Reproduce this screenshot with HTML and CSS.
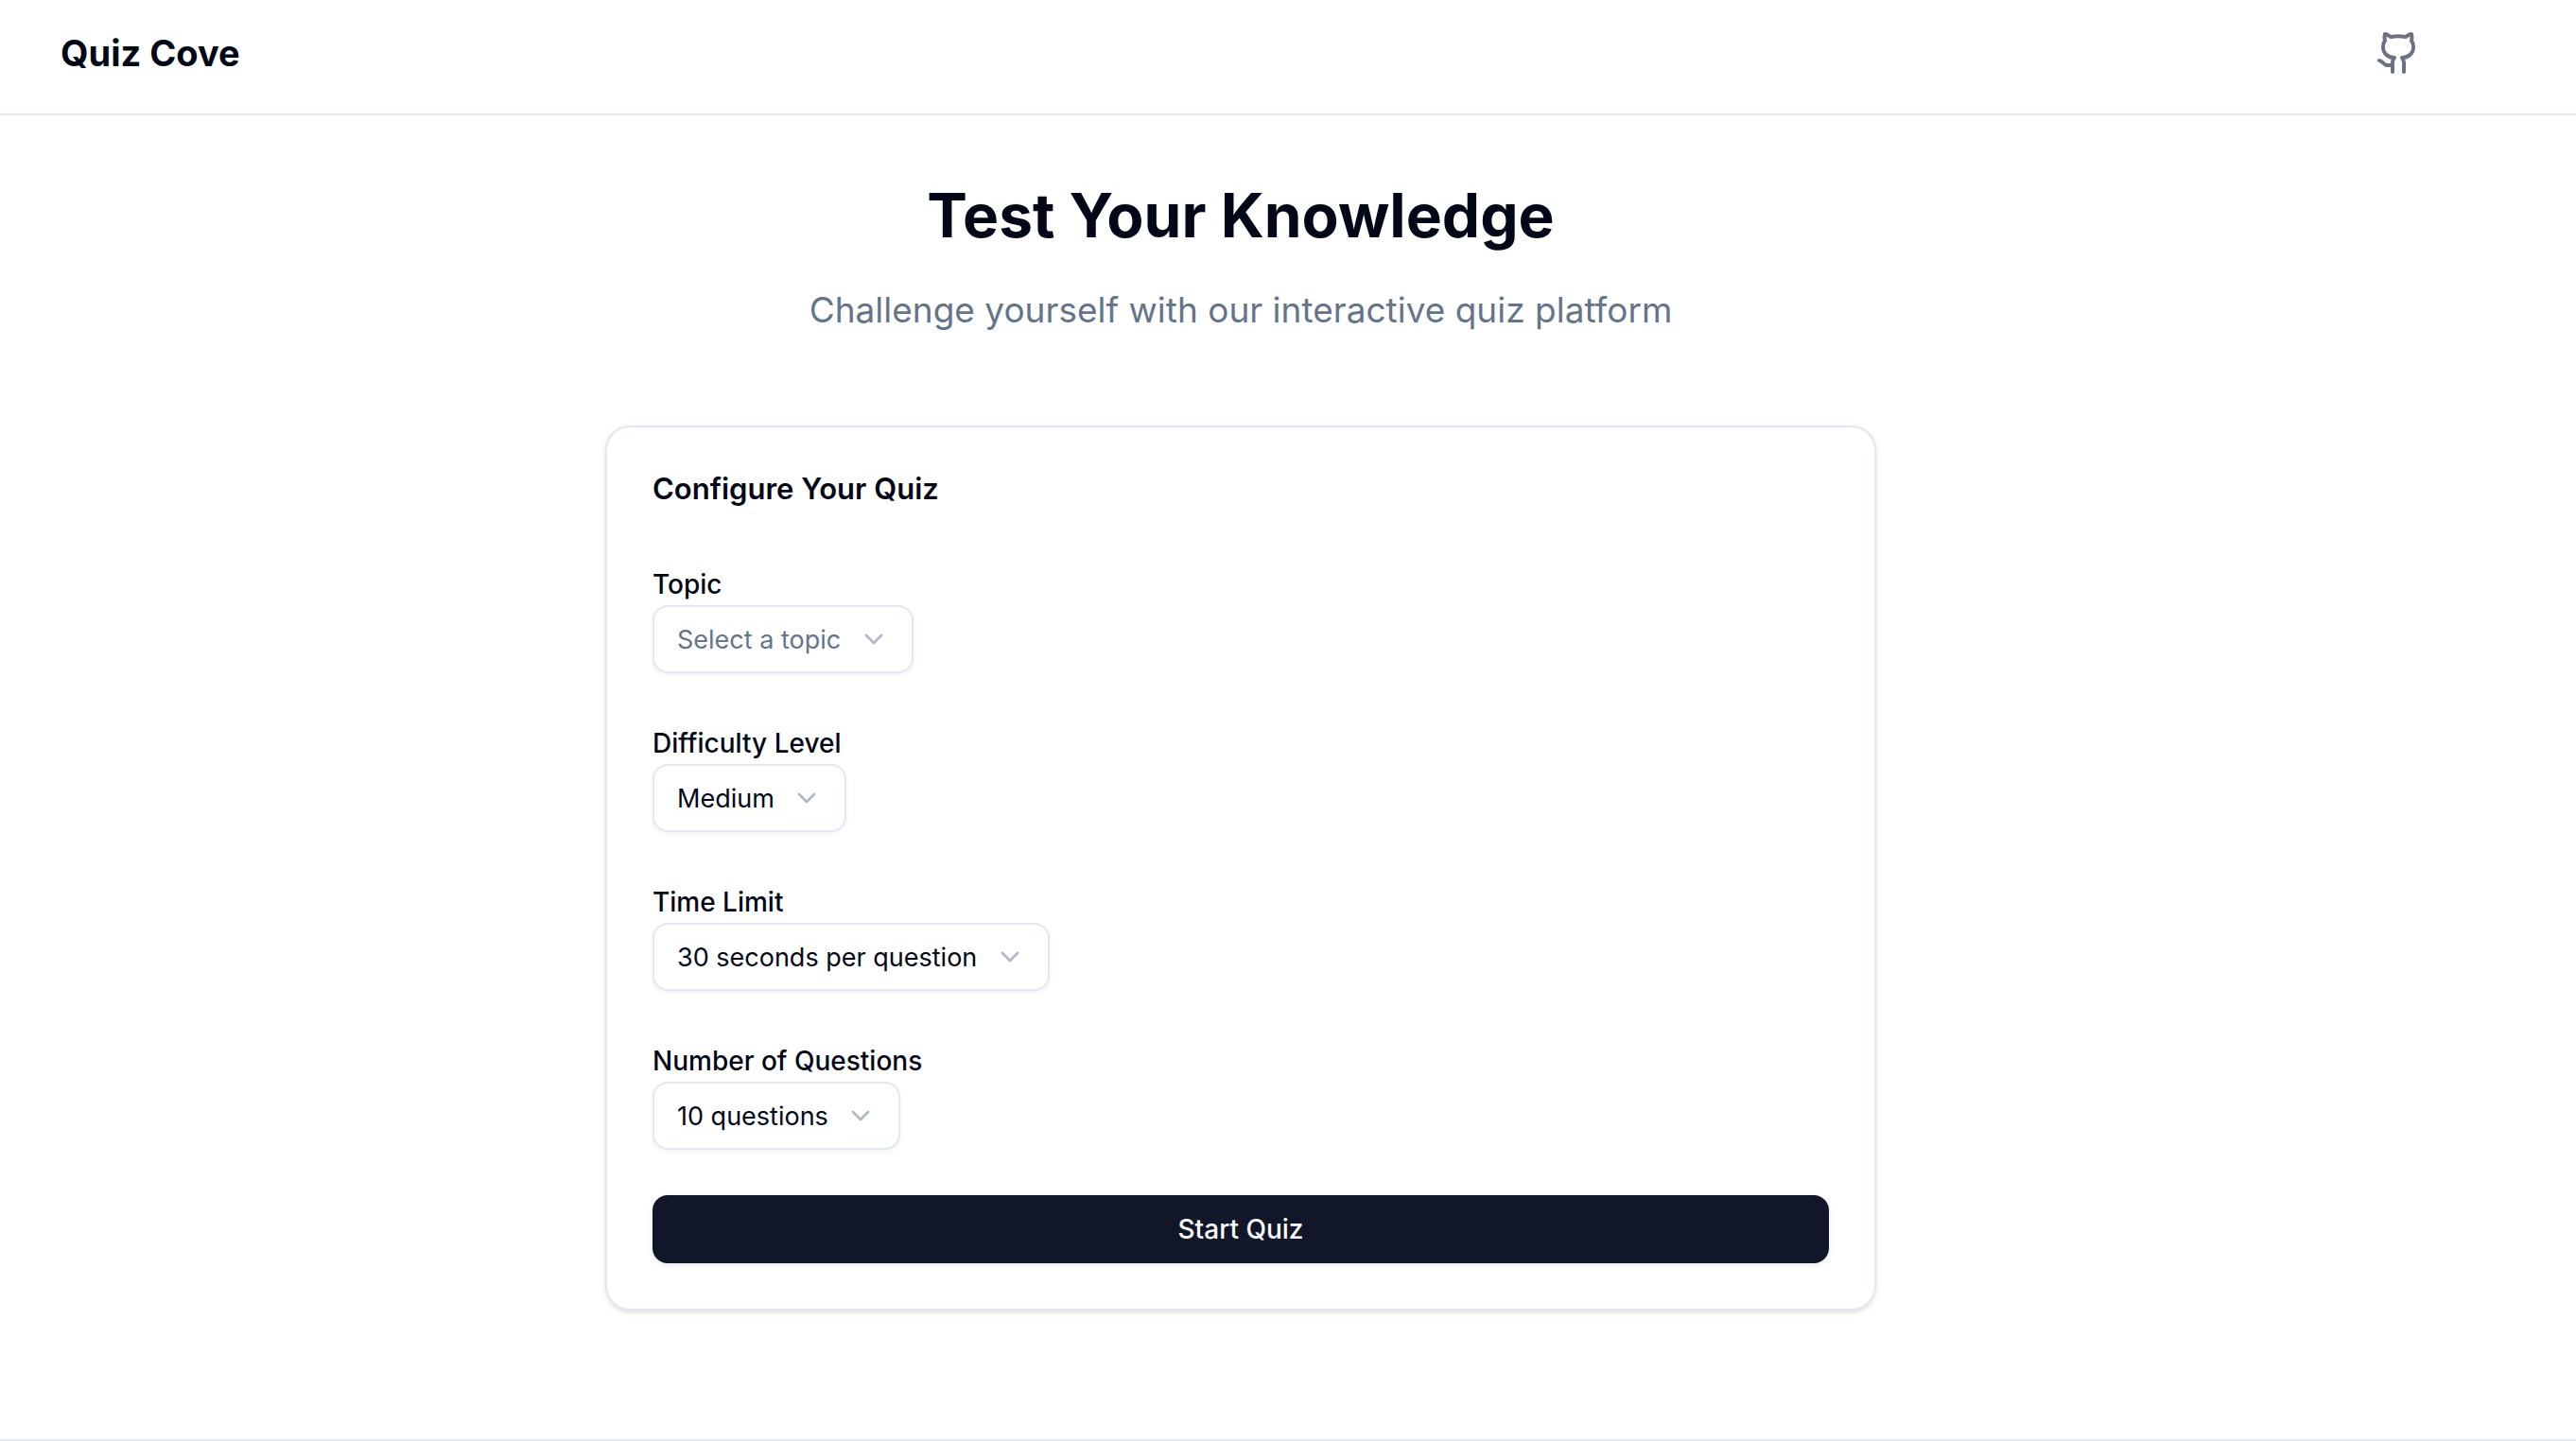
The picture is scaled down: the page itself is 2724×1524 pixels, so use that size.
FILE: index.html
```html
<!DOCTYPE html>
<html lang="en">
<head>
  <meta charset="utf-8">
  <meta name="viewport" content="width=device-width, initial-scale=1">
  <title>Quiz Cove</title>
  <link rel="stylesheet" href="styles.css">
</head>
<body>
  <header class="site-header">
    <div class="container site-bar">
      <a class="brand" href="#">Quiz Cove</a>
      <a class="repo-link" href="#" aria-label="GitHub">
        <svg class="repo-icon" viewBox="0 0 24 24" fill="none" stroke="currentColor" stroke-width="2" stroke-linecap="round" stroke-linejoin="round" aria-hidden="true">
          <path d="M15 22v-4a4.8 4.8 0 0 0-1-3.5c3 0 6-2 6-5.5.08-1.25-.27-2.48-1-3.5.28-1.15.28-2.35 0-3.5 0 0-1 0-3 1.5-2.64-.5-5.36-.5-8 0C6 2 5 2 5 2c-.3 1.15-.3 2.35 0 3.5A5.403 5.403 0 0 0 4 9c0 3.5 3 5.5 6 5.5-.39.49-.68 1.05-.85 1.65-.17.6-.22 1.23-.15 1.85v4"/>
          <path d="M9 18c-4.51 2-5-2-7-2"/>
        </svg>
      </a>
    </div>
  </header>

  <main class="container page">
    <div class="hero">
      <h1 class="hero-title">Test Your Knowledge</h1>
      <p class="hero-text">Challenge yourself with our interactive quiz platform</p>
    </div>

    <form class="card">
      <h2 class="card-title">Configure Your Quiz</h2>
      <div class="fields">
        <div class="field">
          <label class="label" for="topic">Topic</label>
          <div class="select-box">
            <select class="select select-empty" id="topic"><option>Select a topic</option></select>
            <svg class="chevron" viewBox="0 0 24 24" aria-hidden="true"><path d="m6 9 6 6 6-6"/></svg>
          </div>
        </div>
        <div class="field">
          <label class="label" for="difficulty">Difficulty Level</label>
          <div class="select-box">
            <select class="select" id="difficulty"><option>Medium</option></select>
            <svg class="chevron" viewBox="0 0 24 24" aria-hidden="true"><path d="m6 9 6 6 6-6"/></svg>
          </div>
        </div>
        <div class="field">
          <label class="label" for="time-limit">Time Limit</label>
          <div class="select-box">
            <select class="select" id="time-limit"><option>30 seconds per question</option></select>
            <svg class="chevron" viewBox="0 0 24 24" aria-hidden="true"><path d="m6 9 6 6 6-6"/></svg>
          </div>
        </div>
        <div class="field">
          <label class="label" for="question-count">Number of Questions</label>
          <div class="select-box">
            <select class="select" id="question-count"><option>10 questions</option></select>
            <svg class="chevron" viewBox="0 0 24 24" aria-hidden="true"><path d="m6 9 6 6 6-6"/></svg>
          </div>
        </div>
      </div>
      <button class="start" type="button">Start Quiz</button>
    </form>
  </main>

  <footer class="site-footer"></footer>
</body>
</html>
```
FILE: styles.css
```css
:root {
  --ink: #020817;
  --muted: #64748b;
  --line: #e2e7f1;
}

* {
  box-sizing: border-box;
}

body {
  margin: 0;
  background: #fff;
  color: var(--ink);
  font-family: Inter, "Liberation Sans", sans-serif;
  font-size: 28px;
}

.container {
  margin-right: 100px;
  padding: 0 64px;
}

.site-header {
  padding-bottom: 8px;
  border-bottom: 2px solid var(--line);
}

.site-bar {
  display: flex;
  align-items: center;
  justify-content: space-between;
  height: 112px;
}

.brand {
  color: inherit;
  font-size: 38px;
  font-weight: 700;
  line-height: 56px;
  text-decoration: none;
}

.repo-link {
  display: flex;
  color: #6b7280;
}

.repo-icon {
  width: 48px;
  height: 48px;
}

.page {
  display: flex;
  flex-direction: column;
  align-items: center;
  gap: 92px;
  padding-top: 64px;
  padding-bottom: 136px;
}

.hero {
  display: flex;
  flex-direction: column;
  gap: 28px;
  text-align: center;
}

.hero-title {
  margin: 0;
  font-size: 64px;
  font-weight: 700;
  line-height: 84px;
}

.hero-text {
  margin: 0;
  color: var(--muted);
  font-size: 37px;
  line-height: 60px;
}

.card {
  display: flex;
  flex-direction: column;
  width: 100%;
  max-width: 1344px;
  padding: 48px;
  border: 2px solid var(--line);
  border-radius: 26px;
  box-shadow: 0 2px 6px rgba(0, 0, 0, 0.1), 0 2px 4px -2px rgba(0, 0, 0, 0.1);
}

.card-title {
  margin: 0 0 62px;
  font-size: 31px;
  font-weight: 600;
  line-height: 34px;
}

.fields {
  display: grid;
  gap: 52px;
  margin-bottom: 48px;
}

.field {
  display: flex;
  flex-direction: column;
  align-items: flex-start;
}

.label {
  font-weight: 500;
  line-height: 44px;
}

/* The select and its chevron share one grid cell. */
.select-box {
  display: grid;
  align-items: center;
}

.select {
  grid-area: 1 / 1;
  height: 72px;
  padding: 0 74px 0 24px;
  border: 2px solid var(--line);
  border-radius: 16px;
  appearance: none;
  background: transparent;
  box-shadow: 0 2px 4px rgba(0, 0, 0, 0.05);
  color: inherit;
  font: inherit;
  font-size: 27px;
}

.select-empty {
  color: var(--muted);
}

.chevron {
  grid-area: 1 / 1;
  justify-self: end;
  width: 32px;
  height: 32px;
  margin-right: 26px;
  fill: none;
  stroke: var(--muted);
  stroke-width: 2;
  stroke-linecap: round;
  stroke-linejoin: round;
  opacity: 0.5;
  pointer-events: none;
}

.start {
  height: 72px;
  border: 0;
  border-radius: 16px;
  background: #111729;
  box-shadow: 0 2px 6px rgba(0, 0, 0, 0.1);
  color: #f8fafc;
  font: inherit;
  font-weight: 500;
}

.site-footer {
  border-top: 2px solid var(--line);
}
```
